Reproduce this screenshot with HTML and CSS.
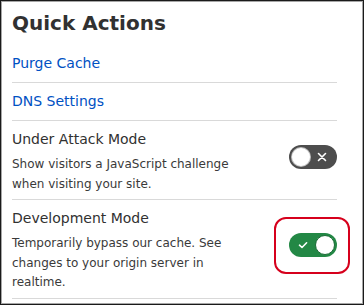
FILE: index.html
```html
<!DOCTYPE html>
<html lang="en">
<head>
<meta charset="utf-8">
<title>Quick Actions</title>
<link rel="stylesheet" href="styles.css">
</head>
<body>
<section class="card">
  <h2 class="card-title">Quick Actions</h2>
  <ul class="actions">
    <li class="link-row"><a href="#" class="action-link">Purge Cache</a></li>
    <li class="link-row"><a href="#" class="action-link">DNS Settings</a></li>
    <li class="toggle-row">
      <div class="toggle-text">
        <div class="toggle-title">Under Attack Mode</div>
        <p class="toggle-desc">Show visitors a JavaScript challenge when visiting your site.</p>
      </div>
      <div class="toggle-wrap">
        <span class="switch switch-off" role="switch" aria-checked="false">
          <span class="knob"></span>
          <svg class="icon icon-x" width="10" height="10" viewBox="0 0 10 10"><path d="M1.5 1.5 L8.5 8.5 M8.5 1.5 L1.5 8.5" stroke="#fff" stroke-width="1.6" stroke-linecap="round" fill="none"/></svg>
        </span>
      </div>
    </li>
    <li class="toggle-row">
      <div class="toggle-text">
        <div class="toggle-title">Development Mode</div>
        <p class="toggle-desc">Temporarily bypass our cache. See changes to your origin server in realtime.</p>
      </div>
      <div class="toggle-wrap">
        <span class="focus-ring"></span>
        <span class="switch switch-on" role="switch" aria-checked="true">
          <svg class="icon icon-check" width="10" height="10" viewBox="0 0 10 10"><path d="M1.5 5.2 L4 7.5 L8.6 2.8" stroke="#fff" stroke-width="1.6" stroke-linecap="round" stroke-linejoin="round" fill="none"/></svg>
          <span class="knob"></span>
        </span>
      </div>
    </li>
  </ul>
</section>
</body>
</html>
```
FILE: styles.css
```css
* { box-sizing: border-box; }
html, body { margin: 0; padding: 0; background: #fff; }
body { font-family: "DejaVu Sans", Verdana, sans-serif; }

.card {
  width: 364px;
  height: 305px;
  border: 1px solid #1a1a1a;
  box-shadow: inset 0 0 0 1px rgba(0,0,0,0.35);
  padding: 10px 26px 0 11px;
  overflow: hidden;
  background: #fff;
}

.card-title {
  margin: 0 0 10px;
  font-size: 20px;
  line-height: 24px;
  font-weight: bold;
  color: #313131;
}

.actions { list-style: none; margin: 0; padding: 0; }

.link-row {
  padding: 8px 0;
  border-bottom: 1px solid #d9d9d9;
}
.action-link {
  font-size: 14px;
  line-height: 21px;
  color: #0051c3;
  text-decoration: none;
}

.toggle-row {
  display: flex;
  align-items: center;
  justify-content: space-between;
  padding: 8px 0 5px;
  border-bottom: 1px solid #d9d9d9;
}
.toggle-text { width: 232px; }
.toggle-title {
  font-size: 14px;
  line-height: 21px;
  color: #313131;
}
.toggle-desc {
  margin: 5px 0 0;
  font-size: 12px;
  line-height: 19.5px;
  color: #3a3a3a;
}

.toggle-wrap {
  position: relative;
  margin-bottom: 10px;
  display: flex;
}

.switch {
  position: relative;
  width: 48px;
  height: 24px;
  border-radius: 12px;
  display: flex;
  align-items: center;
  justify-content: space-between;
  padding: 0 2px;
}
.switch-off { background: #4d4d4d; padding-right: 10px; }
.switch-on { background: #238845; padding-left: 9px; }

.knob {
  width: 20px;
  height: 20px;
  border-radius: 50%;
  background: #fff;
  border: 1px solid rgba(0,0,0,0.25);
}
.switch-on .knob { border-color: #1b6a36; }

.icon { display: block; }

.focus-ring {
  position: absolute;
  top: -16px;
  bottom: -17px;
  left: -15px;
  right: -13px;
  border: 2px solid #d6001c;
  border-radius: 12px;
}
```
